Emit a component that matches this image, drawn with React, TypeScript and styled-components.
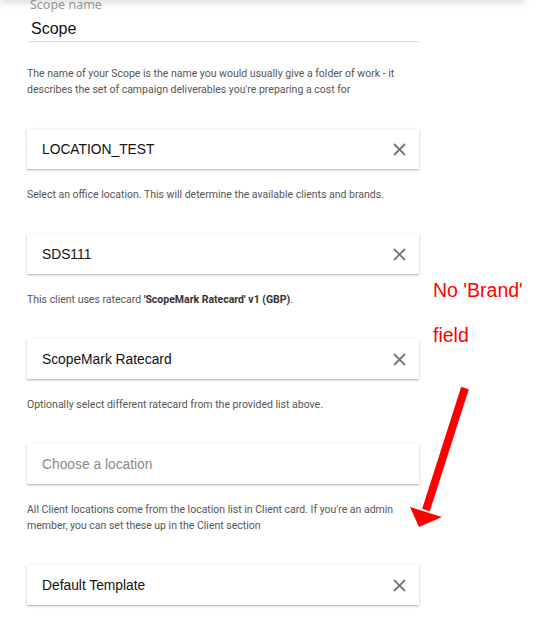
import React from 'react';
import styled, { createGlobalStyle } from 'styled-components';

// --- Global ---
const GlobalStyle = createGlobalStyle`
  html, body {
    margin: 0;
    padding: 0;
    background: #fff;
    overflow: hidden;
  }
`;

// --- Styled Components ---
const Page = styled.div`
  position: relative;
  width: 536px;
  height: 618px;
  overflow: hidden;
  background: #fff;
`;

const TopShade = styled.div`
  position: absolute;
  top: -10px;
  left: 0;
  width: 525px;
  height: 10px;
  background: #fff;
  box-shadow: 0 2px 9px rgba(0, 0, 0, 0.16);
  z-index: 2;
`;

const Form = styled.div`
  display: flex;
  flex-direction: column;
  width: 392px;
  padding-left: 27px;
`;

const NameField = styled.div`
  display: flex;
  flex-direction: column;
  margin: -3px 0 0 1px;
  border-bottom: 1px solid #dcdcdc;
`;

const NameLabel = styled.label`
  font-family: 'Noto Sans', sans-serif;
  font-size: 12.5px;
  line-height: 16px;
  color: #9a9a9a;
  padding-left: 2px;
`;

const NameValue = styled.div`
  font-family: 'Liberation Sans', Arial, sans-serif;
  font-size: 16px;
  line-height: 24px;
  color: #111;
  margin-top: 4px;
  padding-left: 3px;
`;

const Helper = styled.p<{ $top: number }>`
  margin: ${p => p.$top}px 0 0;
  font-family: Roboto, sans-serif;
  font-size: 10.5px;
  line-height: 16px;
  color: #555;
  width: 376px;

  b {
    font-weight: 700;
    color: #333;
  }
`;

const Card = styled.div`
  display: flex;
  align-items: center;
  justify-content: space-between;
  height: 40px;
  margin-top: 31px;
  padding: 0 13px 0 15px;
  background: #fff;
  box-shadow: 0 1px 3px rgba(0, 0, 0, 0.2), 0 1px 1px rgba(0, 0, 0, 0.12);
`;

const CardText = styled.span<{ $placeholder?: boolean }>`
  font-family: 'Liberation Sans', Arial, sans-serif;
  font-size: 13.8px;
  color: ${p => (p.$placeholder ? '#8a8a8a' : '#111')};
`;

const Clear = styled.button`
  display: flex;
  align-items: center;
  justify-content: center;
  width: 14px;
  height: 14px;
  padding: 0;
  border: none;
  background: none;
  cursor: pointer;
`;

const Note = styled.div`
  position: absolute;
  left: 433px;
  top: 268px;
  font-family: 'Liberation Sans', Arial, sans-serif;
  font-size: 19.5px;
  line-height: 45px;
  color: #ff0000;
  white-space: pre;
`;

const ArrowSvg = styled.svg`
  position: absolute;
  left: 400px;
  top: 380px;
`;

// --- Parts ---
const ClearIcon = () => (
  <svg width="13" height="13" viewBox="0 0 13 13">
    <path d="M1 1 L12 12 M12 1 L1 12" stroke="#777" strokeWidth="1.8" />
  </svg>
);

interface SelectProps {
  value?: string;
  placeholder?: string;
}

const Select: React.FC<SelectProps> = ({ value, placeholder }) => (
  <Card>
    {value ? <CardText>{value}</CardText> : <CardText $placeholder>{placeholder}</CardText>}
    {value && (
      <Clear aria-label="Clear">
        <ClearIcon />
      </Clear>
    )}
  </Card>
);

// --- Main Component ---
export default function App() {
  return (
    <Page>
      <GlobalStyle />
      <TopShade />
      <Form>
        <NameField>
          <NameLabel>Scope name</NameLabel>
          <NameValue>Scope</NameValue>
        </NameField>
        <Helper $top={24}>
          The name of your Scope is the name you would usually give a folder of work - it describes the
          set of campaign deliverables you're preparing a cost for
        </Helper>

        <Select value="LOCATION_TEST" />
        <Helper $top={18}>Select an office location. This will determine the available clients and brands.</Helper>

        <Select value="SDS111" />
        <Helper $top={18}>
          This client uses ratecard <b>'ScopeMark Ratecard' v1 (GBP)</b>.
        </Helper>

        <Select value="ScopeMark Ratecard" />
        <Helper $top={18}>Optionally select different ratecard from the provided list above.</Helper>

        <Select placeholder="Choose a location" />
        <Helper $top={18}>
          All Client locations come from the location list in Client card. If you're an admin member, you
          can set these up in the Client section
        </Helper>

        <Select value="Default Template" />
      </Form>

      <Note>{"No 'Brand'\nfield"}</Note>
      <ArrowSvg width="80" height="160" viewBox="0 0 80 160">
        <path d="M65 8 L26 130" stroke="#ff0000" strokeWidth="8" />
        <path d="M10 127 L42 137 L19 147 Z" fill="#ff0000" />
      </ArrowSvg>
    </Page>
  );
}
